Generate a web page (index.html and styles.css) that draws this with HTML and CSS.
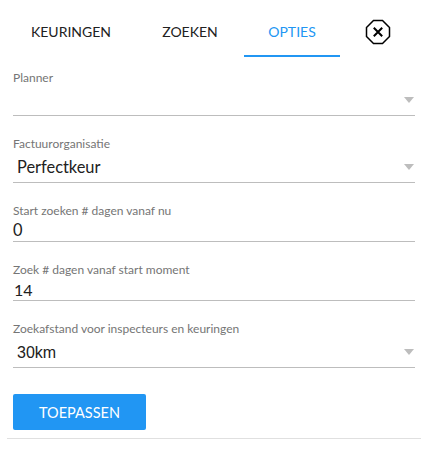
FILE: index.html
```html
<!DOCTYPE html>
<html lang="en">
<head>
    <meta charset="UTF-8">
    <meta name="viewport" content="width=device-width, initial-scale=1.0">
    <title>Opties</title>
    <link rel="stylesheet" href="styles.css">
</head>
<body>
    <div class="tabs">
        <a class="tab tab-keuringen">KEURINGEN</a>
        <a class="tab tab-zoeken">ZOEKEN</a>
        <a class="tab tab-opties active">OPTIES</a>
        <button class="close" aria-label="Sluiten">
            <svg width="26" height="26" viewBox="0 0 26 26">
                <polygon points="8.5,1.5 17.5,1.5 24.5,8.5 24.5,17.5 17.5,24.5 8.5,24.5 1.5,17.5 1.5,8.5" fill="none" stroke="#000" stroke-width="1.5"/>
                <path d="M8.8 8.8 L17.2 17.2 M17.2 8.8 L8.8 17.2" stroke="#000" stroke-width="2"/>
            </svg>
        </button>
    </div>

    <form class="options">
        <div class="field field-planner">
            <label>Planner</label>
            <div class="control select"></div>
        </div>
        <div class="field">
            <label>Factuurorganisatie</label>
            <div class="control select text-lato">Perfectkeur</div>
        </div>
        <div class="field">
            <label>Start zoeken # dagen vanaf nu</label>
            <div class="control input text-lato">0</div>
        </div>
        <div class="field">
            <label>Zoek # dagen vanaf start moment</label>
            <div class="control input input-number">14</div>
        </div>
        <div class="field field-last">
            <label>Zoekafstand voor inspecteurs en keuringen</label>
            <div class="control select">30km</div>
        </div>
        <button type="button" class="apply">TOEPASSEN</button>
    </form>
    <div class="rule"></div>
</body>
</html>
```

FILE: styles.css
```css
body {
    font-family: Lato, "Liberation Sans", sans-serif;
    background-color: #fff;
    color: #212121;
    margin: 0;
}

.tabs {
    display: flex;
    align-items: flex-start;
    height: 57px;
}

.tab {
    display: block;
    height: 55px;
    line-height: 64px;
    font-size: 14px;
    text-align: center;
    color: #212121;
}

.tab-keuringen {
    width: 142px;
}

.tab-zoeken {
    width: 96px;
    margin-right: 6px;
}

.tab-opties {
    width: 96px;
}

.tab.active {
    color: #2196f3;
    border-bottom: 2px solid #2196f3;
}

.close {
    background: none;
    border: none;
    padding: 0;
    margin: 19px 0 0 25px;
    width: 26px;
    height: 26px;
}

.options {
    padding: 0 12px 0 13px;
}

.field {
    margin-bottom: 21px;
}

.field-last {
    margin-bottom: 26px;
}

.field label {
    display: block;
    font-size: 12px;
    line-height: 14px;
    color: #757575;
}

.field-planner {
    padding-top: 14px;
}

.control {
    position: relative;
    border-bottom: 1px solid #bdbdbd;
    font-size: 16px;
    color: #212121;
}

.select {
    font-family: "Liberation Sans", Arial, sans-serif;
    height: 28px;
    line-height: 28px;
    padding-left: 4px;
    margin-top: 3px;
}

.field-planner .select {
    margin-top: 2px;
}

.select::after {
    content: "";
    position: absolute;
    right: 1px;
    top: 10px;
    border-left: 5px solid transparent;
    border-right: 5px solid transparent;
    border-top: 6px solid #bdbdbd;
}

.input {
    height: 22px;
    line-height: 22px;
    margin-top: 1px;
    padding-left: 1px;
}

.input-number {
    line-height: 24px;
}

.text-lato {
    font-family: Lato, sans-serif;
    font-size: 16.4px;
    line-height: 26px;
}

.input.text-lato {
    line-height: 22px;
    padding-left: 0;
}

.apply {
    display: block;
    width: 133px;
    height: 36px;
    background-color: #2196f3;
    color: #fff;
    border: none;
    border-radius: 2px;
    font-family: Lato, sans-serif;
    font-size: 14.5px;
    padding: 0;
}

.rule {
    margin: 8px 6px 0 7px;
    border-top: 1px solid #e0e0e0;
}
```
